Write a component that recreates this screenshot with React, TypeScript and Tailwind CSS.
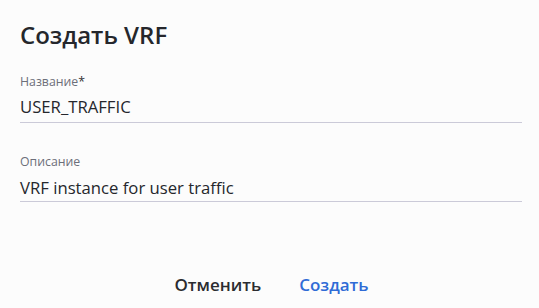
export default function App() {
  return (
    <div className="w-[539px] h-[308px] bg-[#fcfcfc] px-5 pt-[19px] flex flex-col" style={{ fontFamily: "'Open Sans', 'Noto Sans', sans-serif" }}>
      <h1 className="text-[24px] leading-8 font-semibold text-[#25272c]">Создать VRF</h1>

      <div className="mt-[23px] w-[502px]">
        <div className="text-[12.3px] leading-4 text-[#6c6f7a]">
          Название<span className="text-[#333]">*</span>
        </div>
        <div className="mt-[5px] text-[16.7px] leading-6 text-[#25272c] pb-[3px] border-b border-[#cbcad8]">USER_TRAFFIC</div>
      </div>

      <div className="mt-[31px] w-[502px]">
        <div className="text-[12.3px] leading-4 text-[#6c6f7a]">Описание</div>
        <div className="mt-[6px] text-[16.7px] leading-6 text-[#25272c] pb-[1px] border-b border-[#cbcad8]">VRF instance for user traffic</div>
      </div>

      <div className="mt-auto mb-[11px] flex justify-center gap-[38px] pl-[4px]">
        <button className="text-[17px] leading-6 font-semibold text-[#2b2c30] bg-transparent">Отменить</button>
        <button className="text-[17px] leading-6 font-semibold text-[#2f6bd6] bg-transparent">Создать</button>
      </div>
    </div>
  );
}
